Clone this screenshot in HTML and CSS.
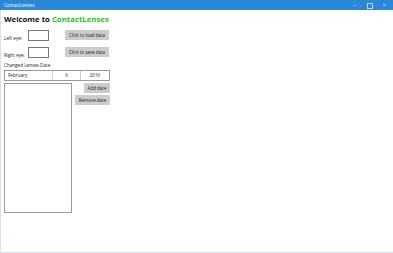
FILE: index.html
```html
<!DOCTYPE html>
<html>
<head>
<meta charset="utf-8">
<link rel="stylesheet" href="styles.css">
</head>
<body>
<div class="window">
  <div class="titlebar">
    <span class="title">ContactLenses</span>
    <div class="controls">
      <span class="ctl">&#8211;</span>
      <span class="ctl box"></span>
      <span class="ctl">&#215;</span>
    </div>
  </div>
  <div class="content">
    <div class="welcome">Welcome to <span class="brand">ContactLenses</span></div>
    <div class="row r1">
      <span class="label">Left eye:</span>
      <span class="input"></span>
      <span class="btn load">Click to load data</span>
    </div>
    <div class="row r2">
      <span class="label">Right eye:</span>
      <span class="input"></span>
      <span class="btn save">Click to save data</span>
    </div>
    <div class="caption">Changed Lenses Date</div>
    <div class="date">
      <span class="seg month">February</span>
      <span class="seg day">6</span>
      <span class="seg year">2016</span>
    </div>
    <div class="lower">
      <div class="list"></div>
      <div class="actions">
        <span class="btn add">Add date</span>
        <span class="btn remove">Remove date</span>
      </div>
    </div>
  </div>
</div>
</body>
</html>
```
FILE: styles.css
```css
* { box-sizing: border-box; }
html, body { margin: 0; padding: 0; }
body {
  width: 393px; height: 253px; overflow: hidden;
  font-family: "Open Sans", "Liberation Sans", sans-serif;
  background: #fff; color: #222;
}
.window {
  width: 393px; height: 253px;
  border-left: 1px solid #cfe3f3;
  border-bottom: 1px solid #cfe3f3;
  display: flex; flex-direction: column;
}
.titlebar {
  height: 10px; background: #2b88d8; margin-left: -1px;
  display: flex; align-items: center; justify-content: space-between;
  color: #fff; padding-left: 4px;
}
.title { font-size: 4.5px; line-height: 10px; }
.controls { display: flex; height: 10px; padding-right: 1px; }
.ctl { width: 15px; text-align: center; font-size: 6px; line-height: 10px; color: #d6e7f7; }
.ctl.box { position: relative; }
.ctl.box::after {
  content: ""; position: absolute; left: 5px; top: 3px; width: 4px; height: 4px;
  border: 1px solid rgba(255,255,255,0.7);
}
.content { padding: 3px 0 0 3px; font-size: 5px; }
.welcome { font-size: 7.8px; font-weight: bold; color: #111; line-height: 10px; height: 12px; padding-top: 1px; }
.brand { color: #21c820; }
.row { display: flex; align-items: flex-start; height: 17px; }
.r1 { margin-top: 5px; }
.label { width: 24px; padding-top: 5px; font-size: 4.6px; line-height: 6px; color: #222; }
.input { width: 21px; height: 11px; border: 1px solid #777; background: #fff; }
.btn {
  background: #cccccc; color: #222; font-size: 4.5px; line-height: 10px; height: 10px;
  padding: 0; white-space: nowrap; display: inline-block; text-align: center;
}
.load, .save { margin-left: 16px; width: 44px; }
.caption { font-size: 4.6px; line-height: 6px; height: 8px; margin-top: -2px; }
.date {
  display: flex; width: 106px; height: 11px; border: 1px solid #999;
  font-size: 4.6px; line-height: 9px;
}
.seg { border-right: 1px solid #ccc; }
.month { width: 48px; padding-left: 3px; }
.day { width: 28px; text-align: center; }
.year { flex: 1; text-align: center; border-right: none; }
.lower { display: flex; margin-top: 2px; }
.list { width: 68px; height: 130px; border: 1px solid #999; }
.actions { display: flex; flex-direction: column; align-items: flex-end; width: 38px; gap: 2px; }
.add { width: 26px; }
.remove { width: 35px; }
```
